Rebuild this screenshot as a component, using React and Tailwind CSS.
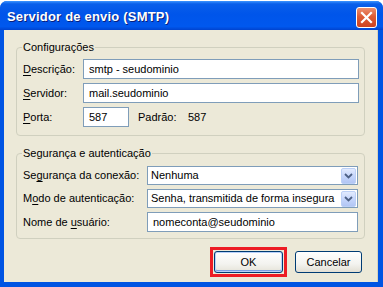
import React from 'react'

const font = { fontFamily: '"Liberation Sans", Arial, sans-serif' }

function U({ children }) {
  return <span className="underline underline-offset-[2px]">{children}</span>
}

function Field({ value, className = '' }) {
  return (
    <div className={`h-[20px] bg-white border border-[#7f9db9] flex items-center pl-[5px] ${className}`}>
      {value}
    </div>
  )
}

function Combo({ value }) {
  return (
    <div className="h-[19px] flex-1 bg-white border border-[#7f9db9] flex items-center pl-[3px] pr-[1px]">
      <span className="flex-1">{value}</span>
      <div className="w-[15px] h-[16px] rounded-[2px] border border-[#bcd0f6] bg-[linear-gradient(180deg,#e2ebfe_0%,#c6d6fb_50%,#b2c6f4_100%)] flex items-center justify-center">
        <svg width="9" height="6" viewBox="0 0 9 6">
          <path d="M1 1 L4.5 4.5 L8 1" fill="none" stroke="#4d6185" strokeWidth="1.8" />
        </svg>
      </div>
    </div>
  )
}

function GroupBox({ title, children, className = '' }) {
  return (
    <div className={`relative border border-[#d0d0bf] rounded-[4px] ${className}`}>
      <span className="absolute -top-[8px] left-[5px] px-[1px] bg-[#ece9d8] leading-[14px]">{title}</span>
      {children}
    </div>
  )
}

export default function App() {
  return (
    <div className="w-[383px] h-[287px] bg-white pt-[1px] overflow-hidden text-[11px] text-black" style={font}>
      <div className="h-[286px] flex flex-col rounded-t-[7px] bg-[#0054e3] overflow-hidden">
        {/* Title bar */}
        <div className="h-[29px] shrink-0 flex items-center justify-between pl-[7px] pr-[6px] bg-[linear-gradient(180deg,#3d95ff_0%,#0a5fea_10%,#0055ea_45%,#0058ee_88%,#0043cf_100%)]">
          <span className="text-white font-bold text-[13px] pt-[3px] tracking-[0.2px] [text-shadow:1px_1px_0_#0a1e7a]">
            Servidor de envio (SMTP)
          </span>
          <div className="w-[21px] h-[21px] mt-[3px] rounded-[3px] border border-white bg-[linear-gradient(180deg,#eb8f6f_0%,#de5c36_45%,#cc4222_100%)] flex items-center justify-center">
            <svg width="13" height="13" viewBox="0 0 13 13">
              <path d="M2 2 L11 11 M11 2 L2 11" stroke="white" strokeWidth="2.2" strokeLinecap="square" />
            </svg>
          </div>
        </div>

        {/* Body */}
        <div className="flex-1 ml-[4px] mr-[5px] mb-[5px] bg-[#ece9d8] border-r border-[#d8d2bd] px-[12px] pt-[17px] flex flex-col">
          <GroupBox title="Configurações" className="pt-[11px] pb-[8px] pl-[6px] pr-[5px]">
            <div className="flex flex-col gap-[4px]">
              <div className="flex items-center">
                <span className="w-[60px]"><U>D</U>escrição:</span>
                <Field value="smtp - seudominio" className="flex-1" />
              </div>
              <div className="flex items-center">
                <span className="w-[60px]"><U>S</U>ervidor:</span>
                <Field value="mail.seudominio" className="flex-1" />
              </div>
              <div className="flex items-center">
                <span className="w-[60px]"><U>P</U>orta:</span>
                <Field value="587" className="w-[46px]" />
                <span className="ml-[9px] w-[50px]">Padrão:</span>
                <span>587</span>
              </div>
            </div>
          </GroupBox>

          <GroupBox title="Segurança e autenticação" className="mt-[17px] pt-[12px] pb-[6px] pl-[6px] pr-[6px]">
            <div className="flex flex-col gap-[4px]">
              <div className="flex items-center">
                <span className="w-[124px]">Se<U>g</U>urança da conexão:</span>
                <Combo value="Nenhuma" />
              </div>
              <div className="flex items-center">
                <span className="w-[124px]">M<U>o</U>do de autenticação:</span>
                <Combo value="Senha, transmitida de forma insegura" />
              </div>
              <div className="flex items-center">
                <span className="w-[124px]">Nome de <U>u</U>suário:</span>
                <Field value="nomeconta@seudominio" className="flex-1 h-[19px] pl-[3px]" />
              </div>
            </div>
          </GroupBox>

          {/* Buttons */}
          <div className="mt-[8px] flex justify-end items-center gap-[8px] pr-[3px]">
            <div className="border-[3px] border-[#ed1c24] p-[1px]">
              <button className="w-[69px] h-[22px] rounded-[3px] border border-[#003c74] bg-[linear-gradient(180deg,#ffffff_0%,#f3f3ef_60%,#e5e3d8_100%)] shadow-[inset_0_0_0_1px_#b9d1fa,inset_0_-1px_0_1px_#7b9fe4]">
                OK
              </button>
            </div>
            <button className="w-[67px] h-[22px] rounded-[3px] border border-[#003c74] bg-[linear-gradient(180deg,#ffffff_0%,#f3f3ef_60%,#e2dfd3_100%)]">
              Cancelar
            </button>
          </div>
        </div>
      </div>
    </div>
  )
}
